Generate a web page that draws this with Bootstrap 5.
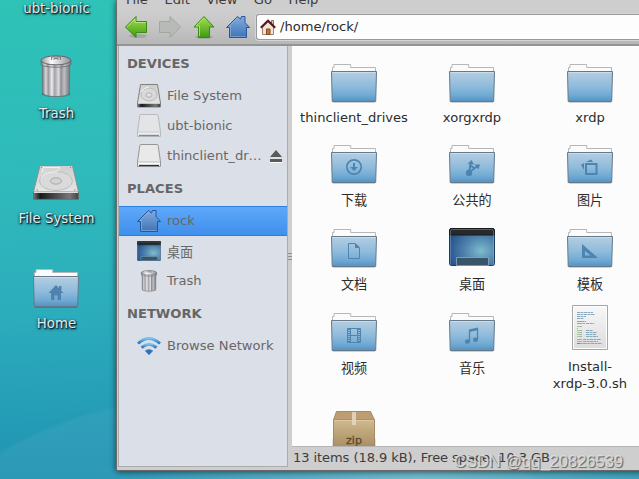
<!DOCTYPE html>
<html lang="en">
<head>
    <meta charset="UTF-8">
    <meta name="viewport" content="width=device-width, initial-scale=1">
    <title>rock - File Manager</title>

    <link rel="stylesheet" href="https://cdn.jsdelivr.net/npm/bootstrap@5.3.0/dist/css/bootstrap.min.css">

    <style>
        body {
            height: 100vh;
            font-family: "DejaVu Sans", "Noto Sans CJK SC", sans-serif;
            font-size: 13.1px;
            line-height: 16px;
            color: #2c2c2c;
            background:
                linear-gradient(90deg, transparent 100px, rgba(190, 225, 230, .5) 420px, rgba(110, 190, 205, .4)) 0 100% / 100% 10px no-repeat,
                radial-gradient(ellipse 330px 175px at 250px 565px, rgba(90, 175, 200, .2) 0 98%, transparent),
                linear-gradient(178deg, #2ec3b7, #2fb9bb 38%, #2cadbc 62%, #249bb6 85%, #2090b1);
        }

        /* Desktop */
        .desktop-pane { width: 116px; padding-right: 4px; }
        .desktop-label {
            padding-left: 1px;
            font-size: 13.3px;
            color: #e6eae9;
            text-shadow: 1px 1px 1px #123, 0 1px 3px rgba(0, 20, 30, .85), 1px 1px 2px rgba(0, 20, 30, .6);
        }
        .first-label { height: 50px; padding-top: 1px; }
        .desktop-item { height: 105px; }
        .desktop-item .desktop-label { margin-top: 8px; }

        /* Window frame */
        .fm-window {
            height: 471px;
            background: #cecece;
            border-left: 1px solid #6b6b6b;
            border-bottom: 1px solid #686868;
            border-bottom-left-radius: 2px;
            box-shadow: 0 1px 6px rgba(0, 25, 35, .7);
        }
        .menu-strip { height: 8px; padding-left: 9px; gap: 16.5px; color: #3c3c3c; overflow: hidden; }
        .menu-strip span { margin-top: -8px; }
        .tool-strip {
            height: 38px;
            padding: 2px 0 0 7px;
            background: linear-gradient(#cfcfcf, #c8c8c8 40%, #b7b7b7);
            border-bottom: 2px solid #949494;
        }
        .tool-strip > svg { margin-right: 10px; }
        .path-box {
            height: 26px;
            margin-left: 6px;
            background: #fdfdfd;
            border: 1px solid #999;
            border-right: 0;
            border-radius: 3px 0 0 3px;
            box-shadow: 0 0 0 1px #d5d5d5;
            padding-left: 3px;
            gap: 4px;
        }

        /* Side pane */
        .side-pane {
            width: 170px;
            height: 421px;
            margin-left: 1px;
            background: #dbdfe7;
            border: 1px solid #ababab;
            border-top: 0;
            color: #686868;
        }
        .side-head { height: 35px; padding: 1px 0 0 8px; color: #666; }
        .side-head.last { height: 36px; padding-top: 2px; }
        .side-row { height: 30px; padding-left: 18px; gap: 6px; }
        .side-row.short { height: 29px; }
        .side-row .cjk { margin-top: 3px; }
        .side-row.selected {
            background: linear-gradient(#5ea8fa, #3f8fec);
            border-top: 1px solid #2b7fe0;
            border-bottom: 1px solid #2b7fe0;
        }
        .pane-grip { width: 4px; }

        /* File view */
        .file-view { height: 400px; background: #fcfcfc; overflow: hidden; }
        .file-grid {
            display: grid;
            grid-template-columns: repeat(3, 118px);
            grid-template-rows: 81px 84px 84px 97px 60px;
            padding: 9px 0 0 3px;
            line-height: 17px;
        }
        .file-item span { margin-top: 5.5px; }
        .file-item span.cjk { margin-top: 8px; }
        .status-strip {
            height: 24px;
            padding: 0 0 2px 1px;
            font-size: 13px;
            letter-spacing: -.06px;
            color: #3c3c3c;
            border-top: 1px solid #b4b4b4;
        }
        .watermark-text {
            position: absolute;
            left: 454px;
            top: 452px;
            font: 16.5px/18px "Liberation Sans", sans-serif;
            color: rgba(225, 225, 225, .88);
            text-shadow: 1px 1px 0 #777, 1px 1px 1px rgba(60, 60, 60, .6);
        }
    </style>
</head>
<body class="overflow-hidden d-flex align-items-start">

<!-- Shared icon shapes -->
<svg width="0" height="0" class="position-absolute">
    <defs>
        <linearGradient id="gBlue" x2="0" y2="1"><stop stop-color="#b4cee1"/><stop offset=".5" stop-color="#8fbbdb"/><stop offset=".8" stop-color="#6fa9d3"/><stop offset="1" stop-color="#5492c2"/></linearGradient>
        <linearGradient id="gGreen" x2="0" y2="1"><stop stop-color="#a4e052"/><stop offset="1" stop-color="#3d9a12"/></linearGradient>
        <linearGradient id="gHome" x2="0" y2="1"><stop stop-color="#81ace0"/><stop offset="1" stop-color="#3e74b4"/></linearGradient>
        <linearGradient id="gCan"><stop stop-color="#77777b"/><stop offset=".13" stop-color="#d9d9dc"/><stop offset=".22" stop-color="#98989f"/><stop offset=".35" stop-color="#ededee"/><stop offset=".45" stop-color="#a3a3a8"/><stop offset=".6" stop-color="#dddddf"/><stop offset=".68" stop-color="#8f8f98"/><stop offset=".8" stop-color="#bebec6"/><stop offset="1" stop-color="#77777b"/></linearGradient>
        <linearGradient id="gLid"><stop stop-color="#9a9a9e"/><stop offset=".35" stop-color="#fafafa"/><stop offset=".6" stop-color="#d2d2d6"/><stop offset="1" stop-color="#8e8e93"/></linearGradient>
        <linearGradient id="gDisk" x2="0" y2="1"><stop stop-color="#cecece"/><stop offset="1" stop-color="#e6e6e6"/></linearGradient>
        <linearGradient id="gDark"><stop stop-color="#777"/><stop offset=".15" stop-color="#1a1a1a"/><stop offset=".8" stop-color="#777"/><stop offset="1" stop-color="#444"/></linearGradient>
        <radialGradient id="gDesk" cx=".7" cy=".6" r=".75"><stop stop-color="#7cbccb"/><stop offset=".5" stop-color="#4f81ad"/><stop offset="1" stop-color="#26528c"/></radialGradient>
        <linearGradient id="gBox" x2="0" y2="1"><stop stop-color="#d1b88e"/><stop offset="1" stop-color="#a68b5f"/></linearGradient>
        <linearGradient id="gWifi" x2="0" y2="1"><stop stop-color="#79c2f0"/><stop offset="1" stop-color="#2a72bd"/></linearGradient>
        <linearGradient id="gPage" x2="0" y2="1"><stop stop-color="#f8f8f8"/><stop offset="1" stop-color="#dcdcdc"/></linearGradient>
    </defs>

    <symbol id="folder" viewBox="0 0 48 48">
        <path d="M3 47.3H45" stroke="#000" stroke-opacity=".18" stroke-width="1.4"/>
        <path d="M2.500 17V12.500H4V9.500H20.700V12.500H45.500V17Z" fill="#fbfbfb" stroke="#b5b7b8"/>
        <path d="M1.500 16.500H46.500L45.700 46.500H2.200Z" fill="url(#gBlue)" stroke="#66798a"/>
        <path d="M2.500 17.500H45.500" stroke="#d0e2ef" stroke-opacity=".8"/>
    </symbol>
    <symbol id="house" viewBox="0 0 24 24">
        <path d="M11.500 1.500 14.500 4 15.500 1.500H19V7.500L23.500 12.500H20.500V22.500H3.500V12.500H.5Z" fill="url(#gHome)" stroke="#27569a" stroke-linejoin="round"/>
        <path d="M11.500 3 3 11.500H4.500V21.500H19.500" fill="none" stroke="#a9c8ee" stroke-opacity=".45"/>
    </symbol>
    <symbol id="can" viewBox="0 0 32 44">
        <ellipse cx="16" cy="40" rx="15" ry="3" fill="#000" opacity=".22"/>
        <path d="M2 8 2.300 38Q3 42.500 16 42.500T29.700 38L30 8Z" fill="url(#gCan)" stroke="#6f6f73" stroke-width=".8"/>
        <path d="M.8 5.500V10Q5 12.500 16 12.500T31.200 10V5.500Z" fill="url(#gCan)" stroke="#66666a" stroke-width=".8"/>
        <ellipse cx="16" cy="5.500" rx="15.200" ry="4.600" fill="url(#gLid)" stroke="#606068"/>
        <path d="M11.500 5V2H20.500V5M14 5V3.500H18V5" fill="none" stroke="#737378"/>
    </symbol>
    <symbol id="hdd" viewBox="0 0 46 35">
        <path d="M7 .5H39.500L45.500 27H.5Z" fill="url(#gDisk)" stroke="#8f8f8f"/>
        <path d="M.5 27.500H45.500V34.300H.5Z" fill="url(#gDark)" stroke="#666" stroke-width=".7"/>
        <path d="M1 27.500H45" stroke="#ddd"/>
        <ellipse cx="23" cy="16" rx="16.500" ry="9.500" fill="#dadada" stroke="#bdbdbd"/>
        <path d="M8 14Q10 8 18 7.500T27 2.500H10L9 8" fill="#d6d6d6" stroke="#f1f1f1"/>
        <ellipse cx="23" cy="16" rx="5.500" ry="3.200" fill="#d3d3d3" stroke="#a9a9a9"/>
        <path d="M8 2.500h1M37 2.500h1M3.500 25h1.500M41 25h1.500" stroke="#888"/>
    </symbol>
    <symbol id="hddSmall" viewBox="0 0 24 24">
        <path d="M3.500 .5H20.500L23.500 19V23H.5V19Z" fill="url(#gDisk)" stroke="#808080" stroke-linejoin="round"/>
        <path d="M1 19.800H23V23H1Z" fill="url(#gDark)"/>
        <ellipse cx="12" cy="10.500" rx="8" ry="6.500" fill="#d9d9d9" stroke="#bbb"/>
        <path d="M4 8Q7 3.500 12 3" fill="none" stroke="#f6f6f6"/>
        <ellipse cx="12" cy="11" rx="3" ry="2.200" fill="#e0e0e0" stroke="#a6a6a6" stroke-width=".8"/>
    </symbol>
    <symbol id="drive" viewBox="0 0 24 24">
        <path d="M4 .5H20Q21 .5 21.200 1.500L23.500 18V22.500H.5V18L2.800 1.500Q3 .5 4 .5Z" fill="#e9e9e9" stroke="#969696"/>
        <path d="M1.500 18H22.500" stroke="#bbb"/>
        <path d="M1.500 19.300H22.500" stroke="#fff"/>
        <path d="M2 21.500H22" stroke="#333" stroke-width="1.200"/>
    </symbol>
    <symbol id="desk" viewBox="0 0 46 38">
        <rect x=".5" y=".5" width="45" height="37" rx="2" fill="url(#gDesk)" stroke="#1e3a5c"/>
        <path d="M.5 7V2.500Q.5 .5 2.500 .5H43.500Q45.500 .5 45.500 2.500V7Z" fill="#262a2b" stroke="#161a1c"/>
        <path d="M1.500 37V2.500Q2 1.500 4 1.500H42Q44.500 1.500 44.500 3V37" fill="none" stroke="#a8c6d6" stroke-opacity=".35"/>
        <path d="M7.500 37.500V29.500H39.500V37.500Z" fill="#3a5569" stroke="#8bafc3" stroke-opacity=".75"/>
    </symbol>
</svg>

<!-- Desktop icons -->
<div class="desktop-pane flex-shrink-0 text-center">
    <div class="desktop-label first-label">ubt-bionic</div>
    <div class="desktop-item d-flex flex-column align-items-center">
        <svg width="48" height="48"><use href="#can" x="8" y="5" width="32" height="43"/></svg>
        <span class="desktop-label">Trash</span>
    </div>
    <div class="desktop-item d-flex flex-column align-items-center">
        <svg width="48" height="48"><use href="#hdd" x="1" y="10" width="46" height="35"/></svg>
        <span class="desktop-label">File System</span>
    </div>
    <div class="desktop-item d-flex flex-column align-items-center">
        <svg width="48" height="48">
            <use href="#folder" width="48" height="48"/>
            <path d="M24 25 31.500 33H29V40H25.500V35.500H22.500V40H19V33H16.500ZM27 26H29.500V30H27Z" fill="#4f82ad"/>
        </svg>
        <span class="desktop-label">Home</span>
    </div>
</div>

<!-- File manager window -->
<div class="fm-window flex-grow-1 d-flex flex-column">
    <div class="menu-strip d-flex flex-shrink-0">
        <span>File</span><span>Edit</span><span>View</span><span>Go</span><span>Help</span>
    </div>

    <div class="tool-strip d-flex align-items-center flex-shrink-0">
        <svg width="24" height="24">
            <ellipse cx="14" cy="21" rx="9" ry="2" fill="#000" opacity=".12"/>
            <path d="M1.500 12 12 1.500V6.500H22.500V17.500H12V22.500Z" fill="url(#gGreen)" stroke="#3b8a14" stroke-linejoin="round"/>
            <path d="M3 12 11 4V7.500H21.500" fill="none" stroke="#c5f08e" stroke-opacity=".7"/>
        </svg>
        <svg width="24" height="24">
            <path d="M22.500 12 12 1.500V6.500H1.500V17.500H12V22.500Z" fill="#b8bab7" stroke="#a2a5a1" stroke-linejoin="round"/>
        </svg>
        <svg width="24" height="24">
            <ellipse cx="12" cy="22" rx="9" ry="2" fill="#000" opacity=".12"/>
            <path d="M12 1.500 22 12H17.500V22.500H6.500V12H2Z" fill="url(#gGreen)" stroke="#3b8a14" stroke-linejoin="round"/>
            <path d="M12 3 4 11H7.500V21" fill="none" stroke="#c5f08e" stroke-opacity=".7"/>
        </svg>
        <svg width="24" height="24" class="me-0"><use href="#house" width="24" height="24"/></svg>
        <div class="path-box d-flex align-items-center flex-grow-1">
            <svg width="16" height="16">
                <path d="M11.500 1.500H13.500V6H11.500Z" fill="#d7c8bb" stroke="#8d6c5c"/>
                <path d="M2.500 8 8 2.500 13.500 8V15.500H2.500Z" fill="#efe3d8" stroke="#9b8474"/>
                <path d="M6.500 15.500V10H10V15.500Z" fill="#c9722f" stroke="#8a4b1c"/>
                <path d="M.8 8.800 8 1.800 15.200 8.800" fill="none" stroke="#5d1518" stroke-width="2.200"/>
            </svg>
            <span>/home/rock/</span>
        </div>
    </div>

    <div class="d-flex flex-grow-1">
        <div class="side-pane flex-shrink-0">
            <div class="side-head fw-bold d-flex align-items-center">DEVICES</div>
            <div class="side-row d-flex align-items-center">
                <svg width="24" height="24"><use href="#hddSmall" width="24" height="24"/></svg>
                <span>File System</span>
            </div>
            <div class="side-row d-flex align-items-center">
                <svg width="24" height="24" class="opacity-50"><use href="#drive" width="24" height="24"/></svg>
                <span>ubt-bionic</span>
            </div>
            <div class="side-row d-flex align-items-center">
                <svg width="24" height="24"><use href="#drive" width="24" height="24"/></svg>
                <span>thinclient_dr…</span>
                <svg width="14" height="14" class="ms-auto me-1">
                    <path d="M1 13.500H13" stroke="#fff"/>
                    <path d="M7 1 13 8H1ZM1 10H13V13H1Z" fill="#5a5a5a"/>
                </svg>
            </div>
            <div class="side-head fw-bold d-flex align-items-center">PLACES</div>
            <div class="side-row selected d-flex align-items-center">
                <svg width="24" height="24"><use href="#house" width="24" height="24"/></svg>
                <span>rock</span>
            </div>
            <div class="side-row d-flex align-items-center">
                <svg width="24" height="24"><use href="#desk" y="2" width="24" height="20"/></svg>
                <span class="cjk">桌面</span>
            </div>
            <div class="side-row short d-flex align-items-center">
                <svg width="24" height="24"><use href="#can" x="3" y="1" width="18" height="22"/></svg>
                <span>Trash</span>
            </div>
            <div class="side-head last fw-bold d-flex align-items-center">NETWORK</div>
            <div class="side-row short d-flex align-items-center">
                <svg width="24" height="24">
                    <g fill="none" stroke="url(#gWifi)" stroke-width="3">
                        <path d="M1 9.500Q12 -.5 23 9.500"/>
                        <path d="M4.500 13.500Q12 7 19.500 13.500"/>
                    </g>
                    <path d="M8 16.800Q12 13.800 16 16.800L12 21Z" fill="#2d6fb8" stroke="#5f9fd8" stroke-width=".6"/>
                </svg>
                <span>Browse Network</span>
            </div>
        </div>

        <div class="pane-grip d-flex align-items-center justify-content-center">
            <svg width="4" height="12"><path d="M0 1.500H4M0 4.500H4M0 7.500H4" stroke="#8f8f8f"/></svg>
        </div>

        <div class="flex-grow-1">
            <div class="file-view">
                <div class="file-grid">
                    <div class="file-item d-flex flex-column align-items-center">
                        <svg width="48" height="48"><use href="#folder" width="48" height="48"/></svg>
                        <span>thinclient_drives</span>
                    </div>
                    <div class="file-item d-flex flex-column align-items-center">
                        <svg width="48" height="48"><use href="#folder" width="48" height="48"/></svg>
                        <span>xorgxrdp</span>
                    </div>
                    <div class="file-item d-flex flex-column align-items-center">
                        <svg width="48" height="48"><use href="#folder" width="48" height="48"/></svg>
                        <span>xrdp</span>
                    </div>
                    <div class="file-item d-flex flex-column align-items-center">
                        <svg width="48" height="48">
                            <use href="#folder" width="48" height="48"/>
                            <circle cx="24" cy="31" r="7.200" fill="none" stroke="#4d84b0" stroke-width="1.700"/>
                            <path d="M23 27H25V31H28L24 35 20 31H23Z" fill="#4d84b0"/>
                        </svg>
                        <span class="cjk">下载</span>
                    </div>
                    <div class="file-item d-flex flex-column align-items-center">
                        <svg width="48" height="48">
                            <use href="#folder" width="48" height="48"/>
                            <circle cx="21" cy="37" r="3.200" fill="#4d84b0"/>
                            <path d="M21 37 22.700 27M21.500 36 29 30.500M23 30 26.500 32" stroke="#4d84b0" stroke-width="2"/>
                            <path d="M19.500 28 23.500 24 26 28.500ZM26.500 28.500 32 28.500 30.500 33.500Z" fill="#4d84b0"/>
                        </svg>
                        <span class="cjk">公共的</span>
                    </div>
                    <div class="file-item d-flex flex-column align-items-center">
                        <svg width="48" height="48">
                            <use href="#folder" width="48" height="48"/>
                            <path d="M20 28H30.500V38H20Z" fill="none" stroke="#4d84b0" stroke-width="2"/>
                            <path d="M20 26 25 23.500 27 26ZM18 27 15 29 18 34Z" fill="#4d84b0"/>
                        </svg>
                        <span class="cjk">图片</span>
                    </div>
                    <div class="file-item d-flex flex-column align-items-center">
                        <svg width="48" height="48">
                            <use href="#folder" width="48" height="48"/>
                            <path d="M18.500 23.500H25.500L29.500 27.500V38.500H18.500Z" fill="none" stroke="#4d84b0"/>
                            <path d="M25 23.500V28H29.500Z" fill="#4d84b0"/>
                        </svg>
                        <span class="cjk">文档</span>
                    </div>
                    <div class="file-item d-flex flex-column align-items-center">
                        <svg width="48" height="48"><use href="#desk" x="1" y="8" width="46" height="38"/></svg>
                        <span class="cjk">桌面</span>
                    </div>
                    <div class="file-item d-flex flex-column align-items-center">
                        <svg width="48" height="48">
                            <use href="#folder" width="48" height="48"/>
                            <path d="M16 24V38H32ZM19 31V35.500H24.500Z" fill="#4d84b0" fill-rule="evenodd"/>
                        </svg>
                        <span class="cjk">模板</span>
                    </div>
                    <div class="file-item d-flex flex-column align-items-center">
                        <svg width="48" height="48">
                            <use href="#folder" width="48" height="48"/>
                            <path d="M17.500 24.500H30.500V38.500H17.500ZM20.500 24V39M27.500 24V39M20.500 31.500H27.500" fill="none" stroke="#4d84b0"/>
                            <path d="M19 25V38M29 25V38" stroke="#4d84b0" stroke-width="2" stroke-dasharray="1 1"/>
                        </svg>
                        <span class="cjk">视频</span>
                    </div>
                    <div class="file-item d-flex flex-column align-items-center">
                        <svg width="48" height="48">
                            <use href="#folder" width="48" height="48"/>
                            <path d="M21.500 37V27L29.500 25V35" fill="none" stroke="#4d84b0" stroke-width="1.300"/>
                            <path d="M21 25.500 30 23.500V26L21 28Z" fill="#4d84b0"/>
                            <ellipse cx="19.500" cy="37.500" rx="2.600" ry="2.200" fill="#4d84b0"/>
                            <ellipse cx="27.500" cy="35.700" rx="2.600" ry="2.200" fill="#4d84b0"/>
                        </svg>
                        <span class="cjk">音乐</span>
                    </div>
                    <div class="file-item d-flex flex-column align-items-center text-center">
                        <svg width="48" height="48">
                            <path d="M6.500 1.500H41.500V45.500H6.500Z" fill="url(#gPage)" stroke="#a5a5a5"/>
                            <path d="M7.500 2.500H40.500V44.500H7.500Z" fill="none" stroke="#fff"/>
                            <path d="M11 8.500H27M11 10.500H29M11 12.500H20M11 14.500H18M20 19.500H28M20 26.500H27M20 28.500H31M20 30.500H30M20 32.500H32M18 39.500H36" stroke="#86a9bf" stroke-dasharray="3 .5"/>
                            <path d="M15 17.500H20M13 19.500H19M17 35.500H35M17 37.500H32" stroke="#dc82b4" stroke-dasharray="3 .5"/>
                            <path d="M11 17.500H15M11 19.500H13" stroke="#b48ae0"/>
                            <path d="M11 22.500H14M11 26.500H14M11 28.500H14M11 30.500H14M11 32.500H14" stroke="#97cf8e"/>
                            <path d="M14 22.500H16M11 24.500H12M14 26.500H16M14 28.500H16M14 30.500H16M14 32.500H16M11 35.500H16M11 37.500H16M14 39.500H18" stroke="#aaa"/>
                            <path d="M11 39.500H14" stroke="#e2585e"/>
                        </svg>
                        <span>Install-<br>xrdp-3.0.sh</span>
                    </div>
                    <div class="file-item d-flex flex-column align-items-center">
                        <svg width="48" height="48">
                            <path d="M2 38V48H46V38Z" fill="#000" opacity=".12"/>
                            <path d="M6.500 10.500H40.500L44.500 19H3.500Z" fill="#bd9e72" stroke="#a58a62"/>
                            <path d="M3.500 19H44.500V48H3.500Z" fill="url(#gBox)" stroke="#a58a62"/>
                            <path d="M4 19.500H44" stroke="#ddc8a5"/>
                            <path d="M22 11H26V24H22Z" fill="#e6d8bf" opacity=".85"/>
                            <text x="24" y="43" text-anchor="middle" font-size="11" fill="#5f4a2a" stroke="#5f4a2a" stroke-width=".3">zip</text>
                        </svg>
                    </div>
                </div>
            </div>
            <div class="status-strip d-flex align-items-center text-nowrap">13 items (18.9 kB), Free space: 10.3 GB</div>
        </div>
    </div>
</div>

<div class="watermark-text text-nowrap">CSDN @qq_20826539</div>

<script src="https://cdn.jsdelivr.net/npm/bootstrap@5.3.0/dist/js/bootstrap.bundle.min.js"></script>
</body>
</html>
